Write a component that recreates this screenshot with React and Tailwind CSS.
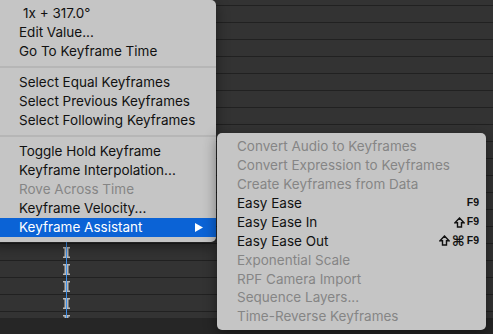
import React from 'react';

const mainItems = [
    { label: '1x + 317.0°', indent: true },
    { label: 'Edit Value...' },
    { label: 'Go To Keyframe Time' },
    { sep: true },
    { label: 'Select Equal Keyframes' },
    { label: 'Select Previous Keyframes' },
    { label: 'Select Following Keyframes' },
    { sep: true },
    { label: 'Toggle Hold Keyframe' },
    { label: 'Keyframe Interpolation...' },
    { label: 'Rove Across Time', disabled: true },
    { label: 'Keyframe Velocity...' },
    { label: 'Keyframe Assistant', active: true, submenu: true },
];

const subItems = [
    { label: 'Convert Audio to Keyframes', disabled: true },
    { label: 'Convert Expression to Keyframes', disabled: true },
    { label: 'Create Keyframes from Data', disabled: true },
    { label: 'Easy Ease', shortcut: { key: 'F9' } },
    { label: 'Easy Ease In', shortcut: { shift: true, key: 'F9' } },
    { label: 'Easy Ease Out', shortcut: { shift: true, cmd: true, key: 'F9' } },
    { label: 'Exponential Scale', disabled: true },
    { label: 'RPF Camera Import', disabled: true },
    { label: 'Sequence Layers...', disabled: true },
    { label: 'Time-Reverse Keyframes', disabled: true },
];

const rows = Array.from({ length: 19 });
const markers = [252, 269, 286, 303, 320];

function KeyframeMarker() {
    return (
        <svg width="7" height="11" viewBox="0 0 7 11">
            <rect x="0" y="0" width="7" height="1.5" fill="#b8b8b8" />
            <rect x="0" y="9.5" width="7" height="1.5" fill="#b8b8b8" />
            <rect x="1.5" y="0" width="4" height="11" fill="#b8b8b8" />
            <rect x="3" y="0" width="1" height="11" fill="#3d8fe8" />
        </svg>
    );
}

function ShiftIcon() {
    return (
        <svg width="11" height="11" viewBox="0 0 11 11">
            <path d="M5.5 1 L10 5.8 H7.5 V10 H3.5 V5.8 H1 Z" fill="none" stroke="#111" strokeWidth="1.4" strokeLinejoin="miter" />
        </svg>
    );
}

function MenuRow({ item }) {
    if (item.sep) {
        return (
            <div className="h-[12px] flex items-center">
                <div className="w-full h-[2px] bg-[#b6b6b6]" />
            </div>
        );
    }
    return (
        <div
            className={`h-[19px] flex items-center pl-[29px] pr-[13px] ${
                item.active ? 'bg-[#0b63d6] text-white' : item.disabled ? 'text-[#858585]' : 'text-[#111]'
            }`}
        >
            <span className={`flex-1 whitespace-nowrap ${item.indent ? 'pl-[4px]' : ''}`}>{item.label}</span>
            {item.submenu && (
                <svg width="8" height="9" viewBox="0 0 8 9">
                    <polygon points="0,0 8,4.5 0,9" fill="white" />
                </svg>
            )}
        </div>
    );
}

export default function App() {
    return (
        <div className="relative w-[493px] h-[334px] overflow-hidden bg-[#333333] font-['Inter',sans-serif] text-[13.5px]">
            {/* Timeline rows */}
            <div className="h-[318px] pt-[5px] overflow-hidden">
                {rows.map((_, i) => (
                    <div key={i} className="h-[17px] border-t border-[#212121]" />
                ))}
            </div>
            <div className="h-[16px] bg-[#262626]" />

            {/* Playhead + keyframes */}
            <div className="absolute left-[66px] top-0 w-px h-[318px] bg-[#3d8fe8]" />
            <div className="absolute left-0 top-0 w-[493px] h-[318px] overflow-hidden">
                {markers.map((y) => (
                    <div key={y} className="absolute left-[63px]" style={{ top: y - 5 }}>
                        <KeyframeMarker />
                    </div>
                ))}
            </div>

            {/* Context menu */}
            <div className="absolute left-[-10px] top-0 w-[226px] h-[242px] pt-[4px] bg-[#c5c5c5] rounded-[5px] shadow-[0_4px_14px_rgba(0,0,0,0.45)]">
                {mainItems.map((item, i) => (
                    <MenuRow key={i} item={item} />
                ))}
            </div>

            {/* Submenu */}
            <div className="absolute left-[217px] top-[133px] w-[269px] h-[197px] pt-[4px] bg-[#c5c5c5] rounded-[5px] shadow-[0_4px_14px_rgba(0,0,0,0.45)]">
                {subItems.map((item, i) => (
                    <div
                        key={i}
                        className={`h-[18.9px] flex items-center pl-[20px] pr-[7px] ${
                            item.disabled ? 'text-[#858585]' : 'text-[#111]'
                        }`}
                    >
                        <span className="flex-1 whitespace-nowrap">{item.label}</span>
                        {item.shortcut && (
                            <span className="flex items-center gap-[2px] text-[#111]">
                                {item.shortcut.shift && <ShiftIcon />}
                                {item.shortcut.cmd && (
                                    <span className="text-[14px] leading-none font-bold font-['DejaVu_Sans',sans-serif]">⌘</span>
                                )}
                                <span className="text-[10.5px] font-bold font-['Liberation_Sans',sans-serif]">{item.shortcut.key}</span>
                            </span>
                        )}
                    </div>
                ))}
            </div>
        </div>
    );
}
